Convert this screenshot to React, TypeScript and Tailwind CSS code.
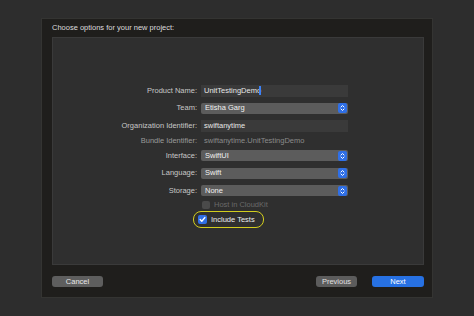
const font = { fontFamily: '"Liberation Sans", Arial, sans-serif' };

function Stepper() {
  return (
    <span className="flex h-[10px] w-[9px] items-center justify-center rounded-[2px] bg-[#2f6fe6]">
      <svg width="5" height="8" viewBox="0 0 5 8" fill="none" stroke="#ffffff" strokeWidth="1" strokeLinecap="round" strokeLinejoin="round">
        <path d="M1 3 L2.5 1.5 L4 3" />
        <path d="M1 5 L2.5 6.5 L4 5" />
      </svg>
    </span>
  );
}

function TextField({ value, caret }: { value: string; caret?: boolean }) {
  return (
    <div className="flex h-[12px] w-[147px] items-center bg-[#3a3a3a] pl-[3px] text-[#e6e6e6]">
      {value}
      {caret && <span className="ml-[-2px] h-[9px] w-[2px] bg-[#3b82f6]" />}
    </div>
  );
}

function Popup({ value }: { value: string }) {
  return (
    <div className="flex h-[11px] w-[147px] items-center justify-between rounded-[2px] bg-[#5c5c5c] pl-[4px] pr-[1px] text-[#f0f0f0]">
      <span>{value}</span>
      <Stepper />
    </div>
  );
}

function Row({ label, h, children, dim }: { label: string; h: string; children: React.ReactNode; dim?: boolean }) {
  return (
    <div className={`flex items-center ${h}`}>
      <div className={`w-[148px] pr-[4px] text-right ${dim ? 'text-[#9a9a9a]' : 'text-[#c8c8c8]'}`}>{label}</div>
      {children}
    </div>
  );
}

export default function App() {
  return (
    <div className="h-[316px] w-[474px] bg-[#2d2d2d] pl-[41px] pt-[18px] text-[7.5px]" style={font}>
      <div className="flex h-[280px] w-[392px] flex-col border border-[#343432] bg-[#1f1e1c]">
        <div className="flex h-[18px] items-center pl-[10px] text-[#dcdcdc]">Choose options for your new project:</div>
        <div className="ml-[10px] h-[228px] w-[372px] border border-[#3a3a3a] bg-[#2f2f2f] pt-[44px]">
          <Row label="Product Name:" h="h-[17px]">
            <TextField value="UnitTestingDemo" caret />
          </Row>
          <Row label="Team:" h="h-[18px]">
            <Popup value="Etisha Garg" />
          </Row>
          <Row label="Organization Identifier:" h="h-[17px]">
            <TextField value="swiftanytime" />
          </Row>
          <Row label="Bundle Identifier:" h="h-[13px]" dim>
            <div className="pl-[3px] text-[#8a8a8a]">swiftanytime.UnitTestingDemo</div>
          </Row>
          <Row label="Interface:" h="h-[17px]">
            <Popup value="SwiftUI" />
          </Row>
          <Row label="Language:" h="h-[18px]">
            <Popup value="Swift" />
          </Row>
          <Row label="Storage:" h="h-[17px]">
            <Popup value="None" />
          </Row>
          <div className="flex h-[12px] items-center pl-[149px]">
            <span className="h-[8px] w-[8px] rounded-[2px] bg-[#4a4a4a]" />
            <span className="ml-[4px] text-[#6a6a6a]">Host in CloudKit</span>
          </div>
          <div className="ml-[140px] flex h-[17px] w-[71px] items-center rounded-[8px] border-[1.5px] border-[#d2cd1e] pl-[4px]">
            <span className="flex h-[9px] w-[9px] items-center justify-center rounded-[2px] bg-[#2f6fe6]">
              <svg width="7" height="7" viewBox="0 0 7 7" fill="none" stroke="#ffffff" strokeWidth="1.4" strokeLinecap="round" strokeLinejoin="round">
                <path d="M1.2 3.6 L2.8 5.2 L5.8 1.6" />
              </svg>
            </span>
            <span className="ml-[4px] text-[#ececec]">Include Tests</span>
          </div>
        </div>
        <div className="flex flex-1 items-center justify-between pl-[10px] pr-[8px]">
          <button className="h-[11px] w-[51px] rounded-[3px] bg-[#5e5e5e] text-[#e8e8e8]">Cancel</button>
          <div className="flex gap-[15px]">
            <button className="h-[11px] w-[41px] rounded-[3px] bg-[#5c5c5c] text-[#e0e0e0]">Previous</button>
            <button className="h-[11px] w-[52px] rounded-[3px] bg-[#2771e3] text-[#ffffff]">Next</button>
          </div>
        </div>
      </div>
    </div>
  );
}
